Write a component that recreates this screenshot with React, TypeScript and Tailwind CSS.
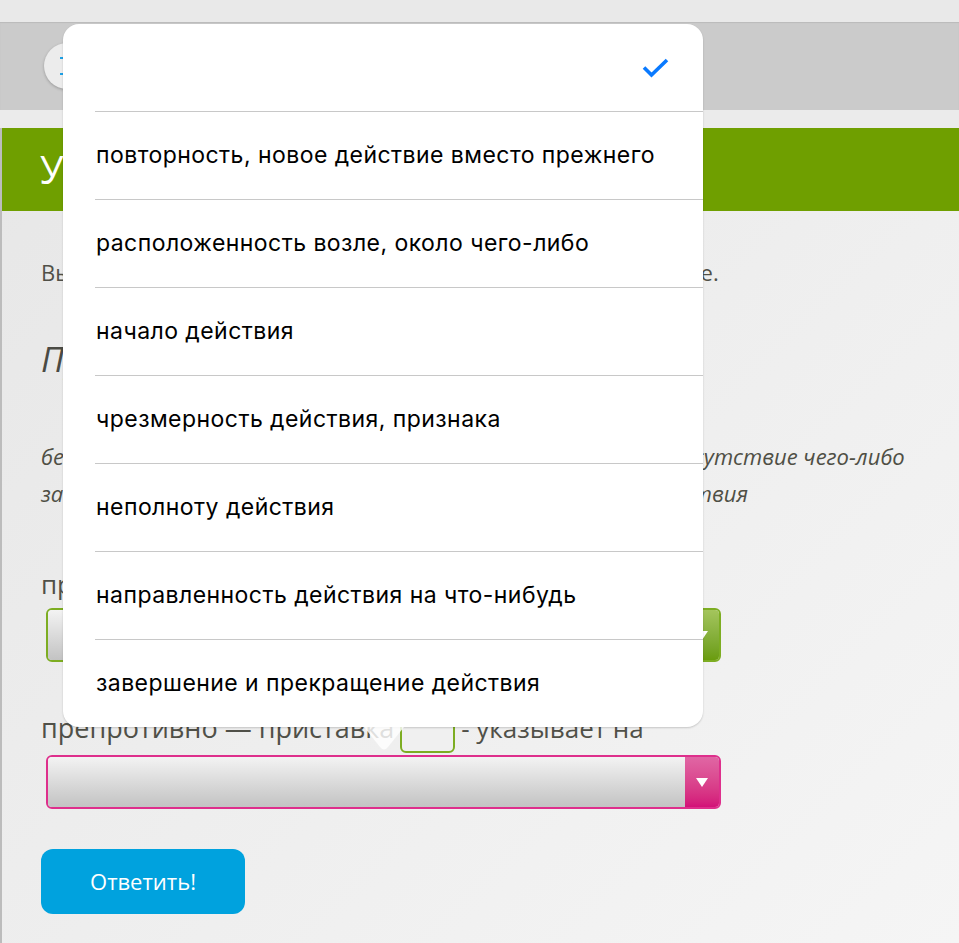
import React from "react";

const options = [
  "повторность, новое действие вместо прежнего",
  "расположенность возле, около чего-либо",
  "начало действия",
  "чрезмерность действия, признака",
  "неполноту действия",
  "направленность действия на что-нибудь",
  "завершение и прекращение действия",
];

function Select({ tone }: { tone: "green" | "pink" }) {
  const green = tone === "green";
  return (
    <div
      className={
        green
          ? "flex h-[54px] w-[675px] overflow-hidden rounded-[6px] border-2 border-[#7dad22]"
          : "flex h-[54px] w-[675px] overflow-hidden rounded-[6px] border-2 border-[#de2f8c]"
      }
    >
      <div className="flex-1 bg-gradient-to-b from-[#f3f3f3] to-[#c3c3c3]" />
      <div
        className={
          green
            ? "flex w-[34px] items-center justify-center bg-gradient-to-b from-[#a4c55c] to-[#6a9c0c]"
            : "flex w-[34px] items-center justify-center bg-gradient-to-b from-[#e066a4] to-[#d30f78]"
        }
      >
        <div className="h-0 w-0 border-x-[6px] border-t-[9px] border-x-transparent border-t-white" />
      </div>
    </div>
  );
}

export default function App() {
  return (
    <div className="relative min-h-[943px] w-full overflow-hidden bg-gradient-to-br from-[#e6e6e6] to-[#f5f5f5] font-['Open_Sans',sans-serif]">
      {/* top bars */}
      <div className="h-[22px] bg-[#e9e9e9]" />
      <div className="flex h-[88px] items-center bg-[#cbcbcb] pl-[44px] shadow-[inset_0_1px_1px_rgba(0,0,0,0.08)]">
        <div className="flex h-[46px] w-[46px] items-center justify-center rounded-full bg-[#ececec] shadow-[0_1px_3px_rgba(0,0,0,0.25)]">
          <svg width="16" height="20" viewBox="0 0 16 20">
            <path d="M1 2h14M5 10h10M1 18h14" stroke="#1ea1e6" strokeWidth="2.2" />
          </svg>
        </div>
      </div>
      <div className="h-[18px] bg-[#ebebeb]" />

      <div className="min-h-[815px] border-l-2 border-[#bcbcbc]">
        <div className="flex h-[83px] items-center bg-[#6f9f00] pl-[38px] text-[38px] text-white">
          Упражнение 1
        </div>

        <div className="px-[39px] pt-[46px] text-[#505048]">
          <p className="whitespace-nowrap text-[22px] leading-[30px] tracking-[0.15px]">
            Выберите из списка правильное значение приставки в слове.
          </p>
          <h2 className="mt-[52px] text-[34px] italic leading-[40px] text-[#4a4a44]">
            Приставки ПРЕ- и ПРИ-
          </h2>
          <div className="mt-[59px] whitespace-nowrap text-[22px] italic leading-[37px] text-[#4f4f45]">
            <div>беззаботный, безвредный — приставка без- указывает на отсутствие чего-либо</div>
            <div>запеть, заиграть — приставка за- указывает на начало действия</div>
          </div>

          <p className="mt-[55px] text-[26px] leading-[34px]">прибрежный — приставка при- указывает на</p>
          <div className="mt-[7px] pl-[5px]">
            <Select tone="green" />
          </div>

          <div className="mt-[49px] flex items-end whitespace-nowrap leading-[34px]">
            <span className="mb-[8px] text-[27px]">препротивно — приставка</span>
            <span className="mx-[6px] h-[38px] w-[55px] rounded-[6px] border-2 border-[#7dad22] bg-[#f0f0f0]" />
            <span className="mb-[8px] text-[26px]">- указывает на</span>
          </div>
          <div className="mt-[2px] pl-[5px]">
            <Select tone="pink" />
          </div>

          <button className="mt-[40px] flex h-[65px] w-[204px] items-center justify-center rounded-[12px] bg-[#00a2de] text-[22px] text-white">
            Ответить!
          </button>
        </div>
      </div>

      {/* picker popover */}
      <div className="absolute left-[63px] top-[24px] w-[640px] overflow-hidden rounded-[16px] bg-white font-['Inter',sans-serif] shadow-[0_1px_2px_rgba(0,0,0,0.18)]">
        <div className="flex h-[87px] items-center justify-end pr-[34px]">
          <svg width="27" height="20" viewBox="0 0 27 20">
            <path d="M2 9.5l7.5 7.5L25 2" fill="none" stroke="#0a7aff" strokeWidth="3.6" />
          </svg>
        </div>
        {options.map((o) => (
          <div key={o} className="ml-[32px] flex h-[88px] items-center border-t border-[#c8c8c8] pl-[1px] text-[23px] tracking-[0.45px] text-black">
            {o}
          </div>
        ))}
      </div>
      <svg className="absolute left-[364px] top-[727px]" width="40" height="24" viewBox="0 0 40 24">
        <path d="M0 0 L16 20 Q20 25 24 20 L40 0 Z" fill="#ffffff" fillOpacity="0.82" />
      </svg>
    </div>
  );
}
